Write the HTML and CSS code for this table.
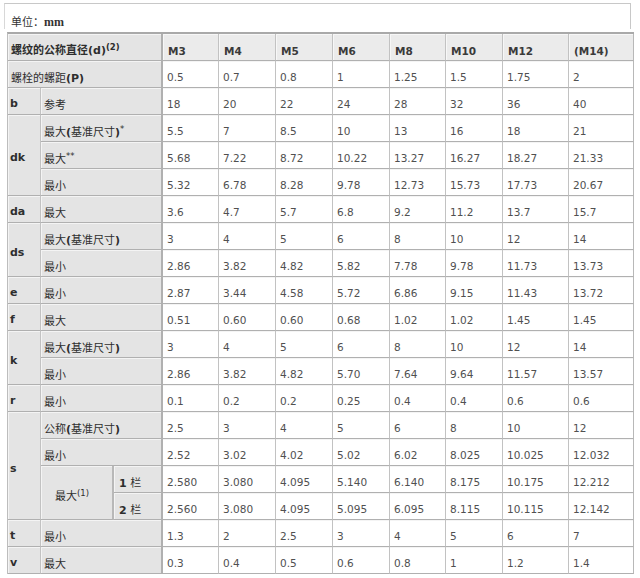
FILE: index.html
```html
<!DOCTYPE html>
<html lang="zh">
<head>
<meta charset="utf-8">
<title>螺栓尺寸</title>
<link rel="stylesheet" href="styles.css">
</head>
<body>
<div class="unit"><span class="cn">单位：</span><b>mm</b></div>
<table class="spec">
  <colgroup>
    <col class="c-a"><col class="c-b1"><col class="c-b2">
    <col class="c-d1"><col class="c-d2"><col class="c-d2"><col class="c-d2"><col class="c-d1"><col class="c-d2"><col class="c-d3"><col class="c-d4">
  </colgroup>
  <tr class="head">
    <th colspan="3" class="lbl hd edge"><span class="cn">螺纹的公称直径</span><b>(d)</b><sup>(2)</sup></th>
    <th>M3</th><th>M4</th><th>M5</th><th>M6</th><th>M8</th><th>M10</th><th>M12</th><th>(M14)</th>
  </tr>
  <tr>
    <td colspan="3" class="lbl hd edge"><span class="cn">螺栓的螺距</span><b>(P)</b></td>
    <td>0.5</td><td>0.7</td><td>0.8</td><td>1</td><td>1.25</td><td>1.5</td><td>1.75</td><td>2</td>
  </tr>
  <tr>
    <td class="lbl sym">b</td><td colspan="2" class="lbl sub edge">参考</td>
    <td>18</td><td>20</td><td>22</td><td>24</td><td>28</td><td>32</td><td>36</td><td>40</td>
  </tr>
  <tr>
    <td rowspan="3" class="lbl sym">dk</td><td colspan="2" class="lbl sub edge">最大<b>(</b>基准尺寸<b>)</b><sup>*</sup></td>
    <td>5.5</td><td>7</td><td>8.5</td><td>10</td><td>13</td><td>16</td><td>18</td><td>21</td>
  </tr>
  <tr>
    <td colspan="2" class="lbl sub edge">最大<sup>**</sup></td>
    <td>5.68</td><td>7.22</td><td>8.72</td><td>10.22</td><td>13.27</td><td>16.27</td><td>18.27</td><td>21.33</td>
  </tr>
  <tr>
    <td colspan="2" class="lbl sub edge">最小</td>
    <td>5.32</td><td>6.78</td><td>8.28</td><td>9.78</td><td>12.73</td><td>15.73</td><td>17.73</td><td>20.67</td>
  </tr>
  <tr>
    <td class="lbl sym">da</td><td colspan="2" class="lbl sub edge">最大</td>
    <td>3.6</td><td>4.7</td><td>5.7</td><td>6.8</td><td>9.2</td><td>11.2</td><td>13.7</td><td>15.7</td>
  </tr>
  <tr>
    <td rowspan="2" class="lbl sym">ds</td><td colspan="2" class="lbl sub edge">最大<b>(</b>基准尺寸<b>)</b></td>
    <td>3</td><td>4</td><td>5</td><td>6</td><td>8</td><td>10</td><td>12</td><td>14</td>
  </tr>
  <tr>
    <td colspan="2" class="lbl sub edge">最小</td>
    <td>2.86</td><td>3.82</td><td>4.82</td><td>5.82</td><td>7.78</td><td>9.78</td><td>11.73</td><td>13.73</td>
  </tr>
  <tr>
    <td class="lbl sym">e</td><td colspan="2" class="lbl sub edge">最小</td>
    <td>2.87</td><td>3.44</td><td>4.58</td><td>5.72</td><td>6.86</td><td>9.15</td><td>11.43</td><td>13.72</td>
  </tr>
  <tr>
    <td class="lbl sym">f</td><td colspan="2" class="lbl sub edge">最大</td>
    <td>0.51</td><td>0.60</td><td>0.60</td><td>0.68</td><td>1.02</td><td>1.02</td><td>1.45</td><td>1.45</td>
  </tr>
  <tr>
    <td rowspan="2" class="lbl sym">k</td><td colspan="2" class="lbl sub edge">最大<b>(</b>基准尺寸<b>)</b></td>
    <td>3</td><td>4</td><td>5</td><td>6</td><td>8</td><td>10</td><td>12</td><td>14</td>
  </tr>
  <tr>
    <td colspan="2" class="lbl sub edge">最小</td>
    <td>2.86</td><td>3.82</td><td>4.82</td><td>5.70</td><td>7.64</td><td>9.64</td><td>11.57</td><td>13.57</td>
  </tr>
  <tr>
    <td class="lbl sym">r</td><td colspan="2" class="lbl sub edge">最小</td>
    <td>0.1</td><td>0.2</td><td>0.2</td><td>0.25</td><td>0.4</td><td>0.4</td><td>0.6</td><td>0.6</td>
  </tr>
  <tr>
    <td rowspan="4" class="lbl sym">s</td><td colspan="2" class="lbl sub edge">公称<b>(</b>基准尺寸<b>)</b></td>
    <td>2.5</td><td>3</td><td>4</td><td>5</td><td>6</td><td>8</td><td>10</td><td>12</td>
  </tr>
  <tr>
    <td colspan="2" class="lbl sub edge">最小</td>
    <td>2.52</td><td>3.02</td><td>4.02</td><td>5.02</td><td>6.02</td><td>8.025</td><td>10.025</td><td>12.032</td>
  </tr>
  <tr>
    <td rowspan="2" class="lbl sub max">最大<sup>(1)</sup></td><td class="lbl col edge"><b>1</b> 栏</td>
    <td>2.580</td><td>3.080</td><td>4.095</td><td>5.140</td><td>6.140</td><td>8.175</td><td>10.175</td><td>12.212</td>
  </tr>
  <tr>
    <td class="lbl col edge"><b>2</b> 栏</td>
    <td>2.560</td><td>3.080</td><td>4.095</td><td>5.095</td><td>6.095</td><td>8.115</td><td>10.115</td><td>12.142</td>
  </tr>
  <tr>
    <td class="lbl sym">t</td><td colspan="2" class="lbl sub edge">最小</td>
    <td>1.3</td><td>2</td><td>2.5</td><td>3</td><td>4</td><td>5</td><td>6</td><td>7</td>
  </tr>
  <tr>
    <td class="lbl sym">v</td><td colspan="2" class="lbl sub edge">最大</td>
    <td>0.3</td><td>0.4</td><td>0.5</td><td>0.6</td><td>0.8</td><td>1</td><td>1.2</td><td>1.4</td>
  </tr>
</table>
</body>
</html>
```

FILE: styles.css
```css
body {
  margin: 0;
  background: #fff;
  font-family: "DejaVu Sans", "Noto Sans CJK SC", sans-serif;
  color: #505050;
}

.unit {
  margin: 3px 9px 0 4px;
  height: 26px;
  box-sizing: border-box;
  border-top: 1px solid #c8c8c8;
  border-right: 1px solid #c8c8c8;
  border-left: 1px solid #d8d8d8;
  padding: 9px 0 0 6px;
  font-size: 11px;
  color: #333;
}

.unit b {
  font-family: "Liberation Serif", serif;
  font-size: 12px;
}

.spec {
  margin: 3px 0 0 7px;
  width: 626px;
  table-layout: fixed;
  border-collapse: separate;
  border-spacing: 0;
  border-top: 2px solid #a9a9a9;
  border-left: 1px solid #bdbdbd;
  font-size: 10.5px;
}

.c-a { width: 33px; }
.c-b1 { width: 73px; }
.c-b2 { width: 49px; }
.c-d1 { width: 56px; }
.c-d2 { width: 57px; }
.c-d3 { width: 66px; }
.c-d4 { width: 65px; }

.spec tr { height: 27px; }

.spec td,
.spec th {
  border-right: 1px solid #c2c2c2;
  border-bottom: 1px solid #b0b0b0;
  padding: 5px 0 0 4px;
  text-align: left;
  vertical-align: middle;
  white-space: nowrap;
  overflow: hidden;
  box-shadow: inset 0 1px 0 #f4f4f4;
}

.spec th {
  background: #ebebeb;
  color: #3a3a3a;
  font-weight: bold;
  padding-left: 5px;
  padding-top: 7px;
  box-shadow: inset 1px 1px 0 #f7f7f7;
}

.spec .lbl {
  background: #e4e4e4;
  color: #2e2e2e;
  font-size: 11px;
  box-shadow: inset 1px 1px 0 #f4f4f4;
}

.spec .edge { border-right: 2px solid #b0b0b0; }

.spec .hd { padding-left: 3px; }
.spec .sym { font-weight: bold; padding-left: 2px; font-size: 11px; }
.spec .sub { padding-left: 3px; }
.spec .col { padding-left: 5px; }
.spec .max { padding-left: 14px; border-right: 2px solid #b8b8b8; }

.spec tr.head th.lbl { padding-top: 3px; }

.spec tr > :last-child { border-right: 1px solid #b8b8b8; }

.spec b { font-weight: bold; }

.spec sup {
  font-size: 8.5px;
  vertical-align: 4px;
  line-height: 0;
}

.cn {
  font-family: "Noto Sans CJK SC", sans-serif;
}
```
